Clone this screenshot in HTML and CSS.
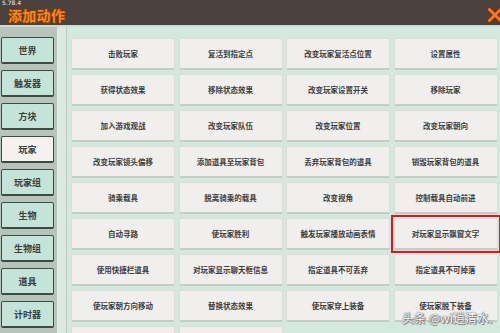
FILE: index.html
```html
<!DOCTYPE html>
<html lang="zh">
<head>
<meta charset="utf-8">
<link rel="stylesheet" href="styles.css">
</head>
<body>
<div class="app">
  <header class="titlebar">
    <span class="ver">5.78.4</span>
    <h1 class="title">添加动作</h1>
    <svg class="close" width="16" height="16" viewBox="0 0 16 16">
      <path d="M2 2 L14 14 M14 2 L2 14" stroke="#7a2a08" stroke-width="5" stroke-linecap="square"/>
      <path d="M2.5 2.5 L13.5 13.5 M13.5 2.5 L2.5 13.5" stroke="#f47a1e" stroke-width="3" stroke-linecap="square"/>
    </svg>
  </header>
  <div class="body">
    <nav class="side">
      <div class="tab">世界</div>
      <div class="tab">触发器</div>
      <div class="tab">方块</div>
      <div class="tab active">玩家</div>
      <div class="tab">玩家组</div>
      <div class="tab">生物</div>
      <div class="tab">生物组</div>
      <div class="tab">道具</div>
      <div class="tab">计时器</div>
    </nav>
    <div class="divider"></div>
    <main class="grid">
      <div class="btn">击败玩家</div>
      <div class="btn">复活到指定点</div>
      <div class="btn">改变玩家复活点位置</div>
      <div class="btn">设置属性</div>
      <div class="btn">获得状态效果</div>
      <div class="btn">移除状态效果</div>
      <div class="btn">改变玩家设置开关</div>
      <div class="btn">移除玩家</div>
      <div class="btn">加入游戏观战</div>
      <div class="btn">改变玩家队伍</div>
      <div class="btn">改变玩家位置</div>
      <div class="btn">改变玩家朝向</div>
      <div class="btn">改变玩家镜头偏移</div>
      <div class="btn">添加道具至玩家背包</div>
      <div class="btn">丢弃玩家背包的道具</div>
      <div class="btn">销毁玩家背包的道具</div>
      <div class="btn">骑乘载具</div>
      <div class="btn">脱离骑乘的载具</div>
      <div class="btn">改变视角</div>
      <div class="btn">控制载具自动前进</div>
      <div class="btn">自动寻路</div>
      <div class="btn">使玩家胜利</div>
      <div class="btn">触发玩家播放动画表情</div>
      <div class="btn marked">对玩家显示飘窗文字</div>
      <div class="btn">使用快捷栏道具</div>
      <div class="btn">对玩家显示聊天框信息</div>
      <div class="btn">指定道具不可丢弃</div>
      <div class="btn">指定道具不可掉落</div>
      <div class="btn">使玩家朝方向移动</div>
      <div class="btn">替换状态效果</div>
      <div class="btn">使玩家穿上装备</div>
      <div class="btn">使玩家脱下装备</div>
      <div class="btn"></div>
      <div class="btn"></div>
    </main>
  </div>
  <div class="watermark">头条 @wi逍清水.</div>
</div>
</body>
</html>
```

FILE: styles.css
```css
html, body {
  margin: 0;
  padding: 0;
  width: 500px;
  height: 333px;
  overflow: hidden;
  font-family: "Noto Sans CJK SC", "Noto Sans", sans-serif;
}

.app {
  position: relative;
  width: 500px;
  height: 333px;
  display: flex;
  flex-direction: column;
  background: #d3e9df;
  overflow: hidden;
}

.titlebar {
  position: relative;
  height: 25px;
  flex: none;
  background: #4b423e;
  border-bottom: 2px solid #c9ddd4;
  display: flex;
  align-items: center;
  justify-content: space-between;
  padding: 0 0 0 8px;
}

.ver {
  position: absolute;
  left: 2px;
  top: -1px;
  font-size: 6px;
  line-height: 7px;
  color: #f2f2f2;
  font-family: "DejaVu Sans", sans-serif;
}

.title {
  margin: 5px 0 0 0;
  font-size: 14px;
  font-weight: 700;
  letter-spacing: 0.3px;
  color: #f58a1f;
  text-shadow: 0 1px 0 #8a3a0a, 1px 0 0 #8a3a0a, -1px 0 0 #8a3a0a, 0 -1px 0 #8a3a0a;
  line-height: 15px;
}

.close {
  margin-right: -3px;
  margin-top: 4px;
}

.body {
  flex: 1;
  display: flex;
  min-height: 0;
}

.side {
  width: 57px;
  flex: none;
  background: #b6c4bc;
  display: flex;
  flex-direction: column;
  gap: 6px;
  padding: 10px 0 0 1px;
  box-sizing: border-box;
}

.tab {
  width: 53px;
  height: 27px;
  box-sizing: border-box;
  background: #c4e3d9;
  border: 1px solid #3e4a46;
  border-bottom-width: 2px;
  border-radius: 2px;
  display: flex;
  align-items: center;
  justify-content: center;
  font-size: 9px;
  font-weight: 700;
  color: #3a3e3c;
  flex: none;
}

.tab.active {
  background: #f5f1f1;
}

.divider {
  width: 9px;
  flex: none;
  background: #dce9e3;
  border-right: 1px solid #bccbc4;
}

.grid {
  flex: 1;
  display: grid;
  grid-template-columns: repeat(4, 104px);
  grid-auto-rows: 32px;
  column-gap: 3.5px;
  row-gap: 4px;
  padding: 11px 0 0 4px;
  align-content: start;
}

.btn {
  background: #f0efed;
  border: 1px solid #dcdcd8;
  border-bottom: 2px solid #c3cdc8;
  border-radius: 2px;
  box-sizing: border-box;
  display: flex;
  align-items: center;
  justify-content: center;
  font-size: 7.5px;
  line-height: 10px;
  font-weight: 700;
  color: #3d3d3d;
  white-space: nowrap;
}

.btn.marked {
  border-radius: 0;
  outline: 2px solid #e3141b;
  outline-offset: 1px;
  position: relative;
  z-index: 1;
}

.watermark {
  position: absolute;
  left: 402px;
  top: 311px;
  font-size: 12px;
  line-height: 13px;
  color: #ffffff;
  text-shadow: 0 0 1px #555, 0 0 1px #555, 1px 1px 1px #777;
  white-space: nowrap;
}
```
